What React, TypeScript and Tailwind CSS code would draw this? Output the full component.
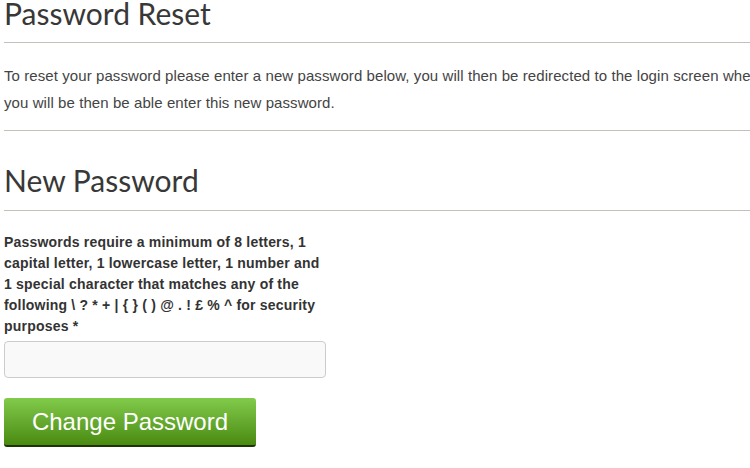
export default function App() {
  return (
    <div className="w-[750px] h-[468px] overflow-hidden bg-white">
      <div className="w-[800px] pl-[4px] text-[#333]">
        <h1
          className="-mt-[3px] mb-[12px] text-[30px] leading-[33px] font-normal text-[#383838]"
          style={{ fontFamily: "Lato, 'Open Sans', sans-serif" }}
        >
          Password Reset
        </h1>
        <div className="border-t border-[#c4c1ba]" />
        <p
          className="mt-[19px] mb-[14px] text-[15px] leading-[27px] tracking-[0.08px] text-[#444] whitespace-nowrap"
          style={{ fontFamily: "'Liberation Sans', Arial, sans-serif" }}
        >
          To reset your password please enter a new password below, you will then be redirected to the login screen where
          <br />
          you will be then be able enter this new password.
        </p>
        <div className="border-t border-[#c4c1ba]" />
        <h2
          className="mt-[33px] mb-[13px] text-[30px] leading-[33px] font-normal text-[#383838]"
          style={{ fontFamily: "Lato, 'Open Sans', sans-serif" }}
        >
          New Password
        </h2>
        <div className="border-t border-[#c4c1ba]" />
        <form
          className="w-[322px] mt-[21px]"
          style={{ fontFamily: "'Liberation Sans', Arial, sans-serif" }}
          onSubmit={(e) => e.preventDefault()}
        >
          <label className="block text-[14px] leading-[21px] tracking-[0.2px] font-bold text-[#333]">
            Passwords require a minimum of 8 letters, 1 capital letter, 1 lowercase letter, 1 number and 1 special
            character that matches any of the following \ ? * + | {"{"} {"}"} ( ) @ . ! £ % ^ for security purposes *
          </label>
          <input
            type="password"
            className="block mt-[4px] w-[322px] h-[37px] rounded-[4px] border border-[#ccc] bg-[#f9f9f9] px-3 outline-none"
          />
          <button
            type="submit"
            className="mt-[20px] w-[252px] h-[49px] rounded-[3px] border-b-2 border-[#1e3307] bg-gradient-to-b from-[#82cb4a] to-[#4a8b0e] text-white text-[24px] leading-none"
          >
            Change Password
          </button>
        </form>
      </div>
    </div>
  )
}
